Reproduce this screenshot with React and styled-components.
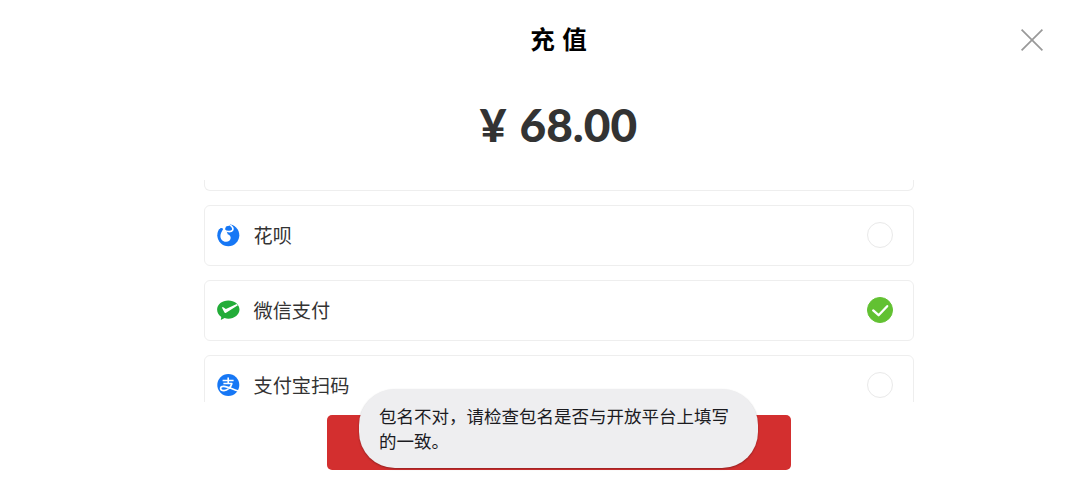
import React from "react";
import styled, { createGlobalStyle } from "styled-components";

const methods = [
  { id: "alipay", name: "支付宝", Icon: AlipayIcon },
  { id: "huabei", name: "花呗", Icon: HuabeiIcon },
  { id: "wechat", name: "微信支付", Icon: WechatIcon },
  { id: "alipayScan", name: "支付宝扫码", Icon: AlipayIcon },
];

function AlipayIcon() {
  return (
    <svg width="24" height="24" viewBox="0 0 24 24">
      <circle cx="12.3" cy="12" r="11" fill="#1677f5" />
      <g fill="none" stroke="#fff">
        <path d="M6.6 7.5 H17.6 M12.2 4.6 V10.6 M7.4 10.5 H16.2" strokeWidth="1.6" />
        <path d="M16 10.2 C14.8 14.4 11.4 17.6 8 17.6 C5.6 17.6 4.6 16.6 4.6 15.4 C4.6 14 5.8 13.2 7.8 13.3 C12 13.5 16.5 16.2 22.6 18" strokeWidth="1.7" />
      </g>
    </svg>
  );
}

function HuabeiIcon() {
  return (
    <svg width="24" height="24" viewBox="0 0 24 24">
      <circle cx="12.3" cy="12.2" r="11" fill="#1677f5" />
      <path d="M3 0 L14.2 0 L14 2.4 L10 3.4 L8.8 6.8 C9.8 8.8 12 9.4 11.6 11.2 C13.6 11.8 14.8 13.2 14.7 15 C14.5 17.4 12.6 18.9 10 18.8 C6.6 18.6 4.4 16.4 4.4 13 C4.4 10.4 5.8 8.4 7.2 6 C6.2 4.8 4.6 4.8 3 6.2 Z" fill="#fff" />
      <path d="M8.6 6.8 C9.8 8.8 15.2 9.4 16.6 7.2 C17.4 5.8 16.6 4 14.8 2.6" fill="none" stroke="#fff" strokeWidth="1.6" strokeLinecap="round" />
      <circle cx="12.7" cy="4.9" r="1.8" fill="#1677f5" />
    </svg>
  );
}

function WechatIcon() {
  return (
    <svg width="24" height="24" viewBox="0 0 24 24">
      <path d="M12.3 2.5 C6.1 2.5 1.1 6.4 1.1 11.6 C1.1 14.7 2.7 17.2 5.3 18.9 L4.8 21.9 L8.6 20.1 C9.8 20.5 11 20.7 12.3 20.7 C18.5 20.7 23.5 16.7 23.5 11.6 C23.5 6.4 18.5 2.5 12.3 2.5 Z" fill="#22ac38" />
      <path d="M5.9 9.6 C6.3 9 7.1 9.1 9.9 10.9 L20.7 5.9 L21.9 7.3 L10.1 14.8 C9.4 15.2 8.7 15 8.3 14.3 Z" fill="#fff" />
    </svg>
  );
}

export default function App() {
  const selected = "wechat";

  return (
    <>
      <GlobalStyle />
      <Page>
        <Header>
          <Title>充 值</Title>
          <CloseButton type="button" aria-label="关闭">
            <svg width="24" height="24" viewBox="0 0 24 24">
              <path d="M1.6 1.6 L22.4 22.4 M22.4 1.6 L1.6 22.4" stroke="#999" strokeWidth="1.7" />
            </svg>
          </CloseButton>
        </Header>
        <Amount>
          <span>¥</span>
          <span>68.00</span>
        </Amount>
        <MethodList>
          {methods.map(({ id, name, Icon }, index) => (
            <Method key={id} $scrolled={index === 0}>
              {index > 0 && (
                <>
                  <IconBox>
                    <Icon />
                  </IconBox>
                  <MethodName>{name}</MethodName>
                  <Radio $checked={id === selected}>
                    {id === selected && (
                      <svg width="24" height="24" viewBox="0 0 24 24">
                        <path d="M5.2 12.4 L10.6 17.2 L19.2 8.2" fill="none" stroke="#fff" strokeWidth="2.3" strokeLinecap="round" strokeLinejoin="round" />
                      </svg>
                    )}
                  </Radio>
                </>
              )}
            </Method>
          ))}
        </MethodList>
        <PayButton type="button" aria-label="支付" />
      </Page>
      <Toast>包名不对，请检查包名是否与开放平台上填写的一致。</Toast>
    </>
  );
}

const GlobalStyle = createGlobalStyle`
  * {
    box-sizing: border-box;
  }
  body {
    margin: 0;
    background: #fff;
    overflow: hidden;
    font-family: "Noto Sans CJK SC", sans-serif;
  }
`;

const Page = styled.div`
  display: flex;
  flex-direction: column;
  align-items: center;
  height: 498px;
  padding-left: 37px;
`;

const Header = styled.header`
  display: grid;
  grid-template-columns: 1fr auto 1fr;
  align-items: center;
  width: 100%;
  height: 79px;
`;

const Title = styled.h1`
  grid-column: 2;
  margin: 0 0 1px;
  font-size: 24.5px;
  line-height: 36px;
  font-weight: 700;
  word-spacing: 2px;
  color: #000;
`;

const CloseButton = styled.button`
  justify-self: end;
  display: flex;
  margin-right: 36.5px;
  padding: 0;
  border: none;
  background: none;
  cursor: pointer;
`;

const Amount = styled.div`
  display: flex;
  justify-content: center;
  gap: 13px;
  height: 101px;
  font-family: Lato, "Noto Sans CJK SC", sans-serif;
  font-size: 46px;
  line-height: 91px;
  font-weight: 900;
  color: #333;
`;

const MethodList = styled.div`
  display: flex;
  flex-direction: column;
  justify-content: flex-start;
  gap: 14px;
  width: 710px;
  height: 222px;
  overflow: hidden;
`;

const Method = styled.div`
  display: flex;
  flex-shrink: 0;
  align-items: center;
  height: ${(props) => (props.$scrolled ? "11px" : "60.8px")};
  padding: 0 20px 0 12px;
  border: 1px solid #eee;
  border-top-width: ${(props) => (props.$scrolled ? "0" : "1px")};
  border-radius: ${(props) => (props.$scrolled ? "0 0 6px 6px" : "6px")};
`;

const IconBox = styled.span`
  display: flex;
  align-items: center;
  justify-content: center;
  width: 24px;
  height: 24px;
  margin: 0 13.5px 0 -0.5px;
`;

const MethodName = styled.span`
  flex: 1;
  font-size: 19.2px;
  line-height: 28px;
  color: #333;
`;

const Radio = styled.span`
  display: flex;
  width: 26px;
  height: 26px;
  border: 1px solid ${(props) => (props.$checked ? "#62c132" : "#e9e9e9")};
  border-radius: 50%;
  background: ${(props) => (props.$checked ? "#62c132" : "#fff")};
`;

const PayButton = styled.button`
  width: 464px;
  height: 55px;
  margin-top: 13px;
  border: none;
  border-radius: 5px;
  background: #d32f2f;
  cursor: pointer;
`;

const Toast = styled.div`
  position: absolute;
  left: 359px;
  top: 389px;
  width: 399px;
  height: 79px;
  padding: 14px 20px;
  border-radius: 36px;
  background: #eeeef0;
  box-shadow: 0 1px 2px rgba(0, 0, 0, 0.3);
  color: #1b1b1f;
  font-size: 17.5px;
  line-height: 25px;
`;
